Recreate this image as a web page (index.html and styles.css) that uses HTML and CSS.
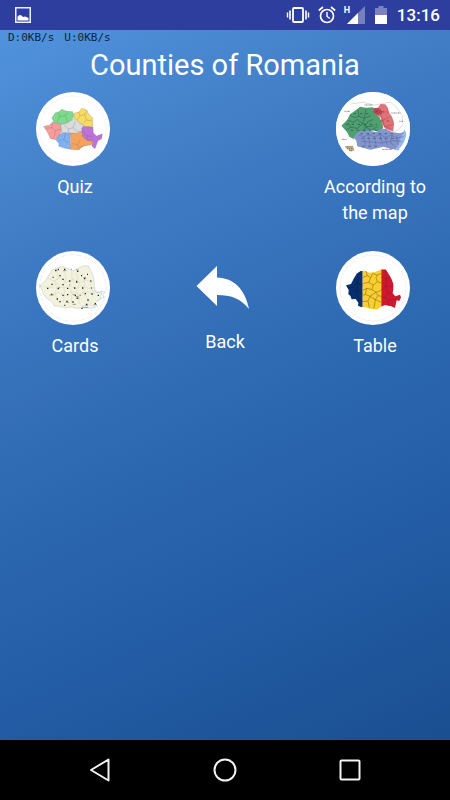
FILE: index.html
```html
<!DOCTYPE html>
<html lang="en">
<head>
<meta charset="utf-8">
<meta name="viewport" content="width=device-width, initial-scale=1">
<title>Counties of Romania</title>
<link rel="stylesheet" href="styles.css">
</head>
<body>
<div class="phone">
  <header class="status">
    <svg class="status-photo" width="16" height="16" viewBox="0 0 16 16" aria-hidden="true"><rect x=".75" y=".75" width="14.5" height="14.5" fill="none" stroke="#eef" stroke-width="1.5"/><path d="M2.500 13.500V9.500l2-1.500 2 .5 1.500 1.500 2-.5 1.500.5 2 1v2.500z" fill="#fff"/></svg>
    <svg width="24" height="18" viewBox="0 0 24 18" aria-hidden="true" fill="none" stroke="#fff"><rect x="7" y="2" width="10" height="14" rx="1" stroke-width="1.800"/><path d="M4 4.500v9M20 4.500v9" stroke-width="1.600"/><path d="M1.500 6.500v5M22.500 6.500v5" stroke-width="1.400"/></svg>
    <svg width="18" height="18" viewBox="0 0 18 18" aria-hidden="true" fill="none" stroke="#fff"><circle cx="9" cy="10" r="6.500" stroke-width="1.700"/><path d="M9 6v4.500l3 2" stroke-width="1.400"/><path d="M.8 4.500L5 1M17.200 4.500L13 1" stroke-width="1.700"/></svg>
    <span class="signal"><span>H</span><svg width="18" height="18" viewBox="0 0 18 18" aria-hidden="true"><path d="M0 18L18 0v18z" fill="#7780be"/><path d="M0 18L11 7v11z" fill="#fff"/></svg></span>
    <svg class="status-battery" width="12" height="18" viewBox="0 0 12 18" aria-hidden="true"><path d="M0 2h3.500V0h5v2H12v7H0z" fill="#7a83c0"/><path d="M0 9h12v9H0z" fill="#fff"/></svg>
    <time>13:16</time>
  </header>
  <main>
    <p class="speed"><span>D:0KB/s</span><span>U:0KB/s</span></p>
    <h1>Counties of Romania</h1>
    <div class="menu">
      <button type="button">
        <svg class="disc" viewBox="18 18 222 222" aria-hidden="true">
          <circle cx="129" cy="129" r="111" fill="#fff"/><circle cx="129" cy="129" r="99" fill="none" stroke="#ececec" stroke-width="1.500"/>
          <g stroke="#666" stroke-opacity=".55" stroke-width="1.200" stroke-linejoin="round">
            <path fill="#7edb8d" d="M66 95l10-15 11-3 8-7 13 5 20 2 4 13-7 13-15 10-22 3-16-4z"/>
            <path fill="#f8db62" d="M131 90l2-9 14-3 8-11 14 4 7 13 12 12 1 24-17 3-12-5-15-10-13-11z"/>
            <path fill="#f79b9d" d="M41 121l19-4 7-9 8 2 17 5 6 15-8 15-13 16-16-3-7-16z"/>
            <path fill="#dbdbdd" d="M92 115l18-3 15-9 10-6 10 11 15 10-3 20-17 6-18-2-26 3z"/>
            <path fill="#7fb0f1" d="M86 148l13-8 23 1-2 19 2 30-17-3-19-6 1-8-9-11z"/>
            <path fill="#f6a25d" d="M122 141l18 1 17-6 3 18 13 9 15 2-3 11-24 4-16 12-23-2z"/>
            <path fill="#bd73d5" d="M155 127l5-6 29 2 1 18 10 9 17-7-2 15-11 6-9 24-9-7 2-16-18-3-12-10z"/>
          </g>
          <path fill="none" stroke="#555" stroke-opacity=".5" stroke-width="1.300" d="M84 80l5 12-8 17m8-17l17-4 9-9m-9 9l7 20m33-30l4 12-9 12m9-12l14-5 9-12m-9 12l5 17 17 3m-17-3l-9 10M47 127l18-2 12 9m-12-9l3-13m9 22l16-5m-16 5l-6 22m31-40l13 13 1 11m-1-11l14-4 7-19m-7 19l13 12 15-2m-50 5l-5 20-14 4m14-4l7 9 8-2m10 6l16 3 7 17m-7-17l7-15m0 23l16-7m-6-41l10 13 19 3m-19-3l4 16 14-4"/>
        </svg>
        <span>Quiz</span>
      </button>
      <button type="button" class="last">
        <svg class="disc" viewBox="18 18 222 222" aria-hidden="true">
          <circle cx="129" cy="129" r="111" fill="#fff"/>
          <path d="M59 54l40-5 35 8 48-9 18 17 15 20 5 28-13 17-19 10" fill="none" stroke="#bcbcbc" stroke-width="1.500"/>
          <path fill="#4f9f70" d="M34 119l18-18 8-16 17-12 13-11 17 3 22-1 3 15 17 15 8 19 3 14-15 9-21-3-22 4-16 2-7 12-8 8-13-7-7-14z"/>
          <path fill="#df7378" d="M127 68l17-2 7-12 15 1 8 11 3 13 9 13 6 18-2 27-23-8-13-18-1-16-16-11z"/>
          <path fill="#b94855" d="M129 67l16-2 9 8 2 10-15 5-11-9z"/>
          <path fill="#8295cc" d="M84 138l16-5 21 2 17 3 14-8 14-2 21 11 23 3 15-6 5 13-8 17-13 14-3 12-23-3-22-7-20 5-20 4-23-6-16-4-3-17-9-10z"/>
          <path fill="#94b8ed" d="M224 130l5 16-3 18-12 17-12 13-6-5 11-14 4-17z"/>
          <path fill="none" stroke="#27574e" stroke-width="1.600" d="M60 88l15 7 12-4 16 6 19-8m-35 2l-3-19m19 25l5-28m-5 28l-5 15 12 10 23-2M52 102l18 7 12-9 15 13-14 14-21-3-14 8m14-8l-8-15m53 13l-5 15m5-15l17 12 19-13m-40 1l13-17 13-4"/>
          <path fill="none" stroke="#5a65a1" stroke-width="1.500" d="M85 147l17 5 14-7 17 8 17-8 14 8 22-5 13 9 22-5M102 152l4 26m10-33l4 34m13-26l5 25m12-33l6 27m8-19l8 24m14-29l-5 22 13 10m5-29l4 24M92 165l29 3 33 3 38-7 24 2"/>
          <path fill="none" stroke="#ae444c" stroke-width="1.400" d="M143 68l8 17 15-8 11 2m-26 6l8 17 18-8m-18 8l4 20 27-6m-27 6l21 6"/>
          <path fill="none" stroke="#1d3939" stroke-opacity=".75" stroke-width="2.200" stroke-dasharray="7 11" d="M72 83h54M47 115h94M62 133h80M92 143h104M94 157h109M97 181h46M152 105h37M136 77h35"/>
          <g fill="none" stroke="#555" stroke-width="2" stroke-dasharray="3 1"><path d="M104 57h24M42 76h18M184 81h28M208 106h12M35 160h16M156 190h30"/></g>
          <path d="M44 180l24-1 6 14-13 4z" fill="#c9b68c"/><path d="M46 183h22M50 188h20M57 193h12" stroke="#77583d" stroke-width="2" stroke-dasharray="4 2"/>
          <circle cx="129" cy="129" r="106" fill="none" stroke="#fff" stroke-width="10"/>
        </svg>
        <span>According to the map</span>
      </button>
      <button type="button">
        <svg class="disc" viewBox="18 18 222 222" aria-hidden="true">
          <circle cx="129" cy="129" r="111" fill="#fff"/><circle cx="129" cy="129" r="100" fill="none" stroke="#d7dfe3" stroke-width="1.500" stroke-dasharray="18 6"/>
          <path fill="#f3f2df" stroke="#bfc6ba" stroke-width="1.500" d="M31 121l16-14 8-14 11-18 21-8 12-2 12 5 18 7 16-7 16-8 14 1 6 13 8 16 4 21-1 15 8 13 16 2-5 15-11 11-8 15-17-4-15 2-14 9-22-5-16 3-20-5-16-2-6-12-13-8-12-13z"/>
          <path fill="none" stroke="#ccd0bd" stroke-width="1.300" d="M53 99l20 10 18-12 17 16 21-10 18 10 23-7 18 7M43 125l23 3 15-14 18 15 21-7 17 10 20-11 17 10 22-4M63 151l24-9 20 10 18-13 23 10 18-9 29 8M78 73l7 25-12 11 8 17-6 20 9 25m20-93l4 25-8 18 4 21-5 30m26-99l2 37-9 18 8 17-2 30m15-93l8 36-8 21 8 21 1 16m9-90l8 33-8 21 15 20 13 18M186 106l-7 19 15 20"/>
          <path fill="none" stroke="#a7d0df" stroke-width="2" d="M27 119l5 7M193 137l8 7 9-5 15 2-7 7 4 9-13 5-5 9m-40 17l23 1 17-7"/>
          <g stroke="#25271f" stroke-width="4" stroke-dasharray="4 17"><path d="M75 77h15M84 73h3M102 73h22M141 79h20M88 92h10M97 103h4M68 97h3M97 119h22M117 108h22M138 111h20M162 101h21M153 92h3M171 88h3M181 108h3M51 130h5M64 118h4M83 131h4M111 130h21M132 129h20M156 129h20M183 129h2M63 148h5M80 162h5M97 151h4M111 149h21M134 151h21M164 146h5M184 147h5M203 151h4M88 170h5M109 169h4M127 171h20M140 160h20M172 165h4M194 176h4M168 178h4M103 181h3M154 190h5"/></g>
          <g stroke="#6c7064" stroke-width="2"><path d="M75 75h12M99 77h10M138 75h8M160 98h9M83 128h8M59 150h12M128 149h8M139 159h9M148 151h6M136 155h10M107 172h10M128 178h10M157 187h18M191 179h10M166 181h8"/></g>
        </svg>
        <span>Cards</span>
      </button>
      <button type="button">
        <svg class="arrow" viewBox="0 0 70 70" aria-hidden="true"><path fill="#fff" d="M8.500 35L29 15v11.500C46 27 57 38 61 58 52 47 43 44 29 44v11z"/></svg>
        <span>Back</span>
      </button>
      <button type="button">
        <svg class="disc" viewBox="18 18 222 222" aria-hidden="true">
          <defs><clipPath id="land"><path d="M48 121l15-4 8-16 9-15 12-8 14-1 12 6 17-2 10-4 8-4 14 0 9 14 9 16 5 14 0 16-2 12 8 9 14-5 3 8-5 11-8-2-5 23-11-5-19-4-14 6-9 8-22-3-14-4-13-1-9-4 1-9-8-11-12 1-4-11-6-4 1-13z"/></clipPath></defs>
          <circle cx="129" cy="129" r="111" fill="#fff"/><circle cx="129" cy="129" r="99" fill="none" stroke="#e5e5e5" stroke-width="1.500"/>
          <g clip-path="url(#land)"><path fill="#07306f" d="M40 60h58v140H40z"/><path fill="#f7cf2e" d="M98 60h56v140H98z"/><path fill="#cf1930" d="M154 60h65v140h-65z"/>
          <path fill="none" stroke="#6b5218" stroke-width="1.400" stroke-linejoin="round" d="M98 98l14-6 10 6 6-12 14 4 12-5M112 92l-4-14M122 98l-6 14-18 4M116 112l14 8 12-10-4-12 4-8M142 110l12 4M130 120l-4 14 12 8 16-6M126 134l-16-4-12 6M110 130l-4 18-8 4M106 148l14 6 18-12M120 154l-6 14-16 2M114 168l4 20M120 154l16 10 8-12 10 2M144 152l-6-10M136 164l-4 26M136 164l18 8"/>
          <path fill="none" stroke="#8c1b2b" stroke-width="1.400" d="M154 96l16 6 16-8M170 102l-4-26M170 102l-4 22 22 0M166 124l-12 10M166 124l8 20 16 2M174 144l-10 14-10-2M164 158l12 8 24-4M176 166l-2 18"/>
          <path fill="none" stroke="#0d1d43" stroke-width="1.400" d="M49 126l20 2 14-13 15 7M70 98l13 17-2 21 17 11M60 145l21-9 1 18 16 17M85 78l-2 37"/></g>
        </svg>
        <span>Table</span>
      </button>
    </div>
  </main>
  <nav class="keys" aria-label="System navigation">
    <button type="button" aria-label="Back"><svg width="26" height="26" viewBox="0 0 26 26"><path d="M4 13L21.500 2.500v21z"/></svg></button>
    <button type="button" aria-label="Home"><svg width="26" height="26" viewBox="0 0 26 26"><circle cx="13" cy="13" r="10.500"/></svg></button>
    <button type="button" aria-label="Recent apps"><svg width="26" height="26" viewBox="0 0 26 26"><rect x="3.500" y="3.500" width="19" height="19" rx="1"/></svg></button>
  </nav>
</div>
</body>
</html>
```
FILE: styles.css
```css
* {
  box-sizing: border-box;
}

body {
  margin: 0;
  font-family: Roboto, sans-serif;
  color: #fff;
}

button {
  padding: 0;
  border: 0;
  background: none;
  color: inherit;
  font: inherit;
}

svg {
  display: block;
  flex: none;
}

.phone {
  display: flex;
  flex-direction: column;
  min-height: 100vh;
}

.status {
  display: flex;
  align-items: center;
  gap: 8px;
  height: 30px;
  padding: 0 10px 0 15px;
  background: #2e3e9e;
}

.status-photo {
  margin-right: auto;
}

.status-battery {
  margin-right: 2px;
}

.status time {
  font-size: 17px;
  font-weight: 500;
  line-height: 30px;
}

.signal {
  display: flex;
  align-items: flex-start;
  margin-right: 2px;
}

.signal span {
  width: 3px;
  font-size: 9px;
  font-weight: 700;
  line-height: 8px;
}

main {
  flex: 1;
  background: linear-gradient(155deg, #5193de 0%, #4380c8 20%, #3873bd 36%, #2c68af 54%, #245ea6 72%, #1a4f91 100%);
}

.speed {
  display: flex;
  gap: 10px;
  margin: 0;
  padding: 0 8px;
  color: #10233c;
  font-family: "DejaVu Sans Mono", monospace;
  font-size: 11px;
  line-height: 16px;
}

h1 {
  margin: 0;
  font-size: 29px;
  font-weight: 400;
  line-height: 38px;
  text-align: center;
}

.menu {
  display: grid;
  grid-template-columns: repeat(3, 1fr);
  row-gap: 25px;
  padding-top: 8px;
}

.menu button {
  display: flex;
  flex-direction: column;
  align-items: center;
  gap: 8px;
  padding: 0 20px;
  font-size: 18px;
  line-height: 26px;
}

.menu .last {
  grid-column: 3;
}

.disc,
.arrow {
  margin-right: 4px;
}

.disc {
  width: 74px;
  height: 74px;
}

.arrow {
  width: 70px;
  height: 70px;
}

.keys {
  display: flex;
  justify-content: space-evenly;
  height: 60px;
  background: #000;
}

.keys button {
  display: grid;
  place-items: center;
  width: 50px;
}

.keys svg {
  fill: none;
  stroke: #f2f2f2;
  stroke-width: 2;
  stroke-linejoin: round;
}
```
